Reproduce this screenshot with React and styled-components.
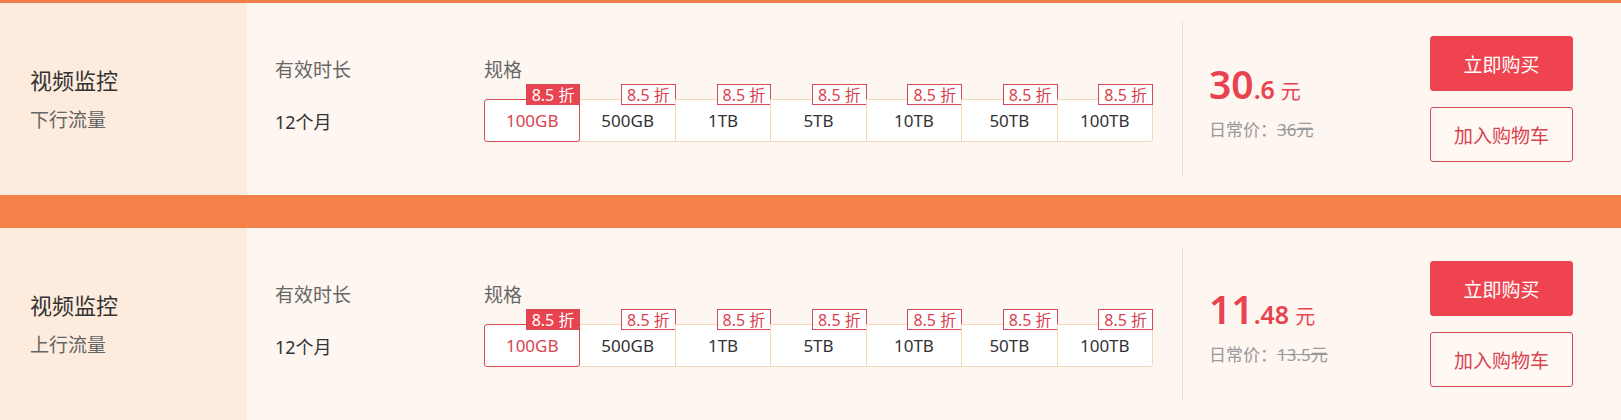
import React from 'react';
import styled, { createGlobalStyle } from 'styled-components';

const GlobalStyle = createGlobalStyle`
  body {
    margin: 0;
    background: #f6814a;
    font-family: "Noto Sans", "Noto Sans CJK SC", sans-serif;
  }
`;

const List = styled.div`
  display: flex;
  flex-direction: column;
  gap: 33px;
  padding-top: 3px;
  background: linear-gradient(180deg, #f07f4a 0%, #f9824a 100%);
`;

const Card = styled.div`
  display: flex;
  height: 192px;
  background: #fef6f0;
`;

const Side = styled.div`
  width: 247px;
  flex-shrink: 0;
  background: #fdebdd;
  padding: 62px 0 0 30px;
  box-sizing: border-box;
`;

const Title = styled.div`
  font-size: 22px;
  line-height: 31px;
  color: #333;
`;

const Subtitle = styled.div`
  margin-top: 10px;
  font-size: 19px;
  line-height: 28px;
  color: #666;
`;

const Field = styled.div`
  box-sizing: border-box;
  padding-top: 53px;
  width: ${p => p.$width || 'auto'};
  padding-left: ${p => p.$indent || 0}px;
  flex-shrink: 0;
`;

const Label = styled.div`
  font-size: 19px;
  line-height: 28px;
  color: #666;
`;

const Value = styled.div`
  margin-top: 17px;
  height: 43px;
  line-height: 43px;
  font-size: 18px;
  color: #333;
`;

const SpecBox = styled.div`
  margin-top: 15px;
  display: grid;
  grid-template-columns: repeat(7, 1fr);
  width: 669px;
  height: 43px;
  padding-left: 1px;
  box-sizing: border-box;
`;

const Cell = styled.div`
  position: relative;
  margin-left: -1px;
  display: flex;
  align-items: center;
  justify-content: center;
  background: #fff;
  border: 1px solid ${p => (p.$active ? '#d44a55' : '#f3d7bb')};
  border-radius: ${p => (p.$active ? '3px' : '0')};
  z-index: ${p => (p.$active ? 1 : 0)};
  font-size: 17px;
  color: ${p => (p.$active ? '#d9434f' : '#333')};
  &:last-child {
    border-radius: 0 3px 3px 0;
  }
`;

const Badge = styled.span`
  position: absolute;
  top: -16px;
  right: -1px;
  height: 21px;
  padding: 0 5px;
  box-sizing: border-box;
  display: flex;
  align-items: center;
  font-size: 16px;
  line-height: 1;
  white-space: nowrap;
  border: 1px solid #d44a55;
  background: ${p => (p.$filled ? '#e8434f' : '#fff')};
  color: ${p => (p.$filled ? '#fff' : '#d9434f')};
`;

const PriceArea = styled.div`
  flex: 1;
  margin: 19px 0 19px 29px;
  padding-left: 26px;
  border-left: 1px solid #eadfd5;
  display: flex;
  flex-direction: column;
  justify-content: center;
  gap: 2px;
`;

const Price = styled.div`
  padding-top: 4px;
  color: #e8434f;
  line-height: 46px;
  white-space: nowrap;
`;

const Int = styled.span`
  font-size: 39px;
  font-weight: 600;
`;

const Dec = styled.span`
  font-size: 25px;
  font-weight: 600;
`;

const Unit = styled.span`
  margin-left: 6px;
  font-size: 20px;
`;

const OldPrice = styled.div`
  font-size: 17px;
  line-height: 24px;
  color: #999;
  s {
    text-decoration: line-through;
  }
`;

const Actions = styled.div`
  width: 143px;
  margin-right: 48px;
  display: flex;
  flex-direction: column;
  justify-content: center;
  gap: 16px;
`;

const Button = styled.button`
  height: 55px;
  border-radius: 3px;
  font-family: inherit;
  font-size: 19px;
  cursor: pointer;
  border: 1px solid ${p => (p.$primary ? '#ef4450' : '#d44a55')};
  background: ${p => (p.$primary ? '#ef4450' : '#fff8f3')};
  color: ${p => (p.$primary ? '#fff' : '#d9434f')};
`;

const specs = ['100GB', '500GB', '1TB', '5TB', '10TB', '50TB', '100TB'];

const products = [
  { name: '视频监控', type: '下行流量', int: '30', dec: '.6', old: '36元' },
  { name: '视频监控', type: '上行流量', int: '11', dec: '.48', old: '13.5元' },
];

const App = () => (
  <>
    <GlobalStyle />
    <List>
      {products.map((p, i) => (
        <Card key={i}>
          <Side>
            <Title>{p.name}</Title>
            <Subtitle>{p.type}</Subtitle>
          </Side>
          <Field $width="237px" $indent={28}>
            <Label>有效时长</Label>
            <Value>12个月</Value>
          </Field>
          <Field>
            <Label>规格</Label>
            <SpecBox>
              {specs.map((s, j) => (
                <Cell key={s} $active={j === 0}>
                  <Badge $filled={j === 0}>8.5 折</Badge>
                  {s}
                </Cell>
              ))}
            </SpecBox>
          </Field>
          <PriceArea>
            <Price>
              <Int>{p.int}</Int>
              <Dec>{p.dec}</Dec>
              <Unit>元</Unit>
            </Price>
            <OldPrice>
              日常价：<s>{p.old}</s>
            </OldPrice>
          </PriceArea>
          <Actions>
            <Button $primary>立即购买</Button>
            <Button>加入购物车</Button>
          </Actions>
        </Card>
      ))}
    </List>
  </>
);

export default App;
